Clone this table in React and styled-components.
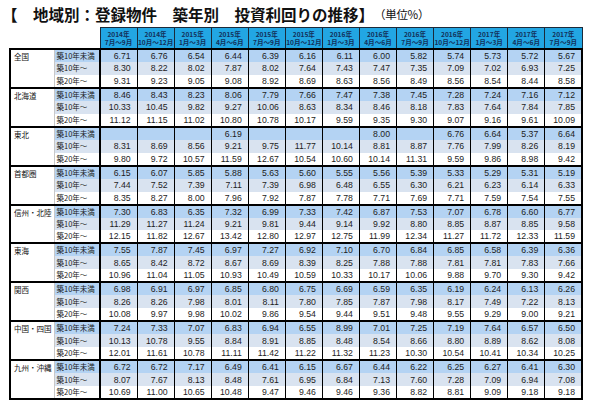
import React from "react";
import styled, { createGlobalStyle } from "styled-components";

const GlobalStyle = createGlobalStyle`
  body {
    margin: 0;
    background: #ffffff;
    font-family: "Noto Sans CJK JP", "Liberation Sans", sans-serif;
    color: #111111;
  }
`;

const tierColors = ["#b4d3f3", "#d9e3f0", "#ffffff"];

const Page = styled.div`
  width: 600px;
  height: 407px;
  overflow: hidden;
`;

const TitleBar = styled.div`
  height: 27px;
  display: flex;
  align-items: center;
  padding-left: 2px;
  padding-top: 1px;
  box-sizing: border-box;
  white-space: nowrap;
`;

const Title = styled.span`
  font-size: 15.5px;
  font-weight: 700;
  letter-spacing: 0;
`;

const Unit = styled.span`
  font-size: 11.5px;
  font-weight: 400;
  margin-left: 0;
  letter-spacing: -0.3px;
`;

const Table = styled.table`
  margin-left: 9px;
  width: 574px;
  border-collapse: collapse;
  table-layout: fixed;
`;

const BlankHead = styled.th`
  border: none;
  padding: 0;
`;

const HeadCell = styled.th`
  height: 20px;
  padding: 0;
  background: #22a6e3;
  border: 1px solid #1b2a3a;
  color: #13305a;
  font-family: "Noto Sans CJK JP", sans-serif;
  font-size: 6.6px;
  font-weight: 700;
  line-height: 8.5px;
  text-align: center;
  white-space: nowrap;
`;

const RegionBody = styled.tbody`
  border-top: 2px solid #000000;
  border-bottom: ${(p) => (p.$last ? "2px solid #000000" : "none")};
`;

const Row = styled.tr`
  height: 12.9px;
`;

const RegionCell = styled.td`
  vertical-align: top;
  padding: 1px 0 0 3px;
  border-left: 2px solid #000000;
  border-right: 1px solid #c8c8c8;
  font-size: 7.5px;
  line-height: 11px;
  white-space: nowrap;
  background: #ffffff;
`;

const CatCell = styled.td`
  padding: 0 0 0 2px;
  background: ${(p) => tierColors[p.$tier]};
  border-right: 2px solid #000000;
  font-size: 7.5px;
  line-height: 12px;
  white-space: nowrap;
  color: #1a1a1a;
`;

const ValueCell = styled.td`
  padding: 0 6px 0 0;
  background: ${(p) => tierColors[p.$tier]};
  border-left: 1px solid #000000;
  border-right: ${(p) => (p.$end ? "2px" : "1px")} solid #000000;
  font-family: "Liberation Sans", Arial, sans-serif;
  font-size: 8.7px;
  line-height: 12px;
  text-align: right;
  color: #1c1c1c;
  white-space: nowrap;
`;

const periods = [
  ["2014年", "7月～9月"],
  ["2014年", "10月～12月"],
  ["2015年", "1月～3月"],
  ["2015年", "4月～6月"],
  ["2015年", "7月～9月"],
  ["2015年", "10月～12月"],
  ["2016年", "1月～3月"],
  ["2016年", "4月～6月"],
  ["2016年", "7月～9月"],
  ["2016年", "10月～12月"],
  ["2017年", "1月～3月"],
  ["2017年", "4月～6月"],
  ["2017年", "7月～9月"],
];

const categories = ["築10年未満", "築10年～", "築20年～"];

const regions = [
  {
    name: "全国",
    rows: [
      ["6.71", "6.76", "6.54", "6.44", "6.39", "6.16", "6.11", "6.00", "5.82", "5.74", "5.73", "5.72", "5.67"],
      ["8.30", "8.22", "8.02", "7.87", "8.02", "7.64", "7.43", "7.47", "7.35", "7.09", "7.02", "6.93", "7.25"],
      ["9.31", "9.23", "9.05", "9.08", "8.92", "8.69", "8.63", "8.56", "8.49", "8.56", "8.54", "8.44", "8.58"],
    ],
  },
  {
    name: "北海道",
    rows: [
      ["8.46", "8.43", "8.23", "8.06", "7.79", "7.66", "7.47", "7.38", "7.45", "7.28", "7.24", "7.16", "7.12"],
      ["10.33", "10.45", "9.82", "9.27", "10.06", "8.63", "8.34", "8.46", "8.18", "7.83", "7.64", "7.84", "7.85"],
      ["11.12", "11.15", "11.02", "10.80", "10.78", "10.17", "9.59", "9.35", "9.30", "9.07", "9.16", "9.61", "10.09"],
    ],
  },
  {
    name: "東北",
    rows: [
      ["", "", "", "6.19", "", "", "", "8.00", "", "6.76", "6.64", "5.37", "6.64"],
      ["8.31", "8.69", "8.56", "9.21", "9.75", "11.77", "10.14", "8.81", "8.87", "7.76", "7.99", "8.26", "8.19"],
      ["9.80", "9.72", "10.57", "11.59", "12.67", "10.54", "10.60", "10.14", "11.31", "9.59", "9.86", "8.98", "9.42"],
    ],
  },
  {
    name: "首都圏",
    rows: [
      ["6.15", "6.07", "5.85", "5.88", "5.63", "5.60", "5.55", "5.56", "5.39", "5.33", "5.29", "5.31", "5.19"],
      ["7.44", "7.52", "7.39", "7.11", "7.39", "6.98", "6.48", "6.55", "6.30", "6.21", "6.23", "6.14", "6.33"],
      ["8.35", "8.27", "8.00", "7.96", "7.92", "7.87", "7.78", "7.71", "7.69", "7.71", "7.59", "7.54", "7.55"],
    ],
  },
  {
    name: "信州・北陸",
    rows: [
      ["7.30", "6.83", "6.35", "7.32", "6.99", "7.33", "7.42", "6.87", "7.53", "7.07", "6.78", "6.60", "6.77"],
      ["11.29", "11.27", "11.24", "9.21", "9.81", "9.44", "9.14", "9.92", "8.80", "8.85", "8.87", "8.85", "9.58"],
      ["12.15", "11.82", "12.67", "13.42", "12.80", "12.97", "12.75", "11.99", "12.34", "11.27", "11.72", "12.33", "11.59"],
    ],
  },
  {
    name: "東海",
    rows: [
      ["7.55", "7.87", "7.45", "6.97", "7.27", "6.92", "7.10", "6.70", "6.84", "6.85", "6.58", "6.39", "6.36"],
      ["8.65", "8.42", "8.72", "8.67", "8.69", "8.39", "8.25", "7.88", "7.88", "7.81", "7.81", "7.83", "7.66"],
      ["10.96", "11.04", "11.05", "10.93", "10.49", "10.59", "10.33", "10.17", "10.06", "9.88", "9.70", "9.30", "9.42"],
    ],
  },
  {
    name: "関西",
    rows: [
      ["6.98", "6.91", "6.97", "6.85", "6.80", "6.75", "6.69", "6.59", "6.35", "6.19", "6.24", "6.13", "6.26"],
      ["8.26", "8.26", "7.98", "8.01", "8.11", "7.80", "7.85", "7.87", "7.98", "8.17", "7.49", "7.22", "8.13"],
      ["10.08", "9.97", "9.98", "10.02", "9.86", "9.54", "9.44", "9.51", "9.48", "9.55", "9.29", "9.00", "9.21"],
    ],
  },
  {
    name: "中国・四国",
    rows: [
      ["7.24", "7.33", "7.07", "6.83", "6.94", "6.55", "8.99", "7.01", "7.25", "7.19", "7.64", "6.57", "6.50"],
      ["10.13", "10.78", "9.55", "8.84", "8.91", "8.85", "8.48", "8.54", "8.66", "8.80", "8.89", "8.62", "8.08"],
      ["12.01", "11.61", "10.78", "11.11", "11.42", "11.22", "11.32", "11.23", "10.30", "10.54", "10.41", "10.34", "10.25"],
    ],
  },
  {
    name: "九州・沖縄",
    rows: [
      ["6.72", "6.72", "7.17", "6.49", "6.41", "6.15", "6.67", "6.44", "6.22", "6.25", "6.27", "6.41", "6.30"],
      ["8.07", "7.67", "8.13", "8.48", "7.61", "6.95", "6.84", "7.13", "7.60", "7.28", "7.09", "6.94", "7.08"],
      ["10.69", "11.00", "10.65", "10.48", "9.47", "9.46", "9.46", "9.36", "8.82", "8.81", "9.09", "9.18", "9.18"],
    ],
  },
];

export default function App() {
  return (
    <Page>
      <GlobalStyle />
      <TitleBar>
        <Title>【　地域別：登録物件　築年別　投資利回りの推移】</Title>
        <Unit>（単位%）</Unit>
      </TitleBar>
      <Table>
        <colgroup>
          <col style={{ width: 44 }} />
          <col style={{ width: 46 }} />
          {periods.map((p, idx) => (
            <col key={idx} />
          ))}
        </colgroup>
        <thead>
          <tr>
            <BlankHead />
            <BlankHead />
            {periods.map((p, idx) => (
              <HeadCell key={idx}>
                {p[0]}
                <br />
                {p[1]}
              </HeadCell>
            ))}
          </tr>
        </thead>
        {regions.map((region, regionIdx) => (
          <RegionBody key={region.name} $last={regionIdx === regions.length - 1}>
            {region.rows.map((row, rowIdx) => (
              <Row key={rowIdx}>
                {rowIdx === 0 && <RegionCell rowSpan={3}>{region.name}</RegionCell>}
                <CatCell $tier={rowIdx}>{categories[rowIdx]}</CatCell>
                {row.map((val, idx) => (
                  <ValueCell key={idx} $tier={rowIdx} $end={idx === row.length - 1}>
                    {val}
                  </ValueCell>
                ))}
              </Row>
            ))}
          </RegionBody>
        ))}
      </Table>
    </Page>
  );
}
